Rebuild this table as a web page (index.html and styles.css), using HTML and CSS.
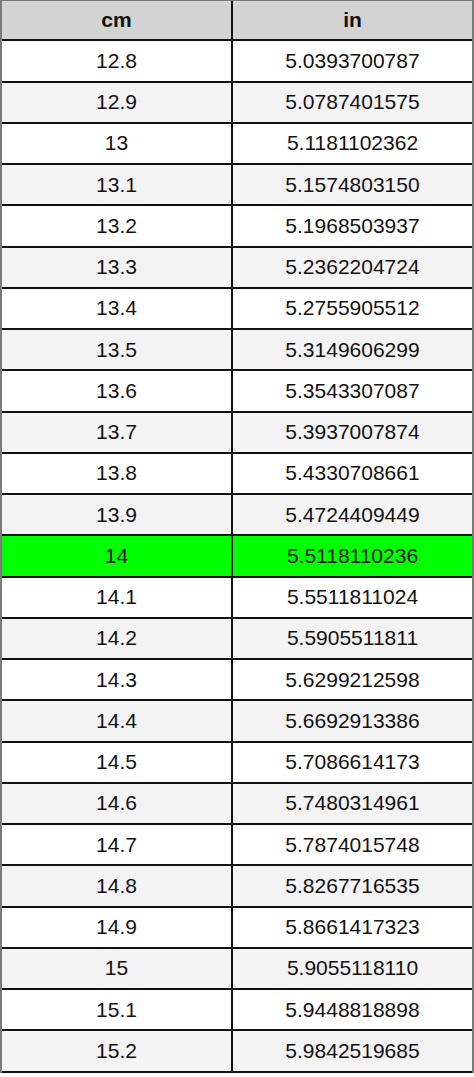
FILE: index.html
```html
<!DOCTYPE html>
<html>
<head>
<meta charset="utf-8">
<link rel="stylesheet" href="styles.css">
</head>
<body>
<div class="table">
  <div class="row head"><div class="cell">cm</div><div class="cell">in</div></div>
  <div class="row"><div class="cell">12.8</div><div class="cell">5.0393700787</div></div>
  <div class="row alt"><div class="cell">12.9</div><div class="cell">5.0787401575</div></div>
  <div class="row"><div class="cell">13</div><div class="cell">5.1181102362</div></div>
  <div class="row alt"><div class="cell">13.1</div><div class="cell">5.1574803150</div></div>
  <div class="row"><div class="cell">13.2</div><div class="cell">5.1968503937</div></div>
  <div class="row alt"><div class="cell">13.3</div><div class="cell">5.2362204724</div></div>
  <div class="row"><div class="cell">13.4</div><div class="cell">5.2755905512</div></div>
  <div class="row alt"><div class="cell">13.5</div><div class="cell">5.3149606299</div></div>
  <div class="row"><div class="cell">13.6</div><div class="cell">5.3543307087</div></div>
  <div class="row alt"><div class="cell">13.7</div><div class="cell">5.3937007874</div></div>
  <div class="row"><div class="cell">13.8</div><div class="cell">5.4330708661</div></div>
  <div class="row alt"><div class="cell">13.9</div><div class="cell">5.4724409449</div></div>
  <div class="row hl"><div class="cell">14</div><div class="cell">5.5118110236</div></div>
  <div class="row"><div class="cell">14.1</div><div class="cell">5.5511811024</div></div>
  <div class="row alt"><div class="cell">14.2</div><div class="cell">5.5905511811</div></div>
  <div class="row"><div class="cell">14.3</div><div class="cell">5.6299212598</div></div>
  <div class="row alt"><div class="cell">14.4</div><div class="cell">5.6692913386</div></div>
  <div class="row"><div class="cell">14.5</div><div class="cell">5.7086614173</div></div>
  <div class="row alt"><div class="cell">14.6</div><div class="cell">5.7480314961</div></div>
  <div class="row"><div class="cell">14.7</div><div class="cell">5.7874015748</div></div>
  <div class="row alt"><div class="cell">14.8</div><div class="cell">5.8267716535</div></div>
  <div class="row"><div class="cell">14.9</div><div class="cell">5.8661417323</div></div>
  <div class="row alt"><div class="cell">15</div><div class="cell">5.9055118110</div></div>
  <div class="row"><div class="cell">15.1</div><div class="cell">5.9448818898</div></div>
  <div class="row alt"><div class="cell">15.2</div><div class="cell">5.9842519685</div></div>
</div>
</body>
</html>
```
FILE: styles.css
```css
html, body {
  margin: 0;
  padding: 0;
  background: #ffffff;
}
.table {
  width: 474px;
  box-sizing: border-box;
  border-left: 2px solid #7a7a7a;
  border-right: 2px solid #7a7a7a;
  border-top: 1px solid #7a7a7a;
  font-family: "Liberation Sans", Arial, sans-serif;
  font-size: 21px;
  color: #111;
}
.row {
  display: grid;
  grid-template-columns: 229px 2px 1fr;
  height: 41.25px;
  box-sizing: border-box;
  border-bottom: 2px solid #111;
  background: #ffffff;
}
.row .cell:first-child {
  grid-column: 1;
}
.row .cell:last-child {
  grid-column: 3;
}
.row::after {
  content: "";
  grid-column: 2;
  grid-row: 1;
  background: #111;
}
.cell {
  display: flex;
  align-items: center;
  justify-content: center;
  grid-row: 1;
}
.head {
  background: #d3d3d3;
  font-weight: bold;
  height: 40.25px;
}
.alt {
  background: #f3f3f3;
}
.hl {
  background: #00ff00;
}
```
